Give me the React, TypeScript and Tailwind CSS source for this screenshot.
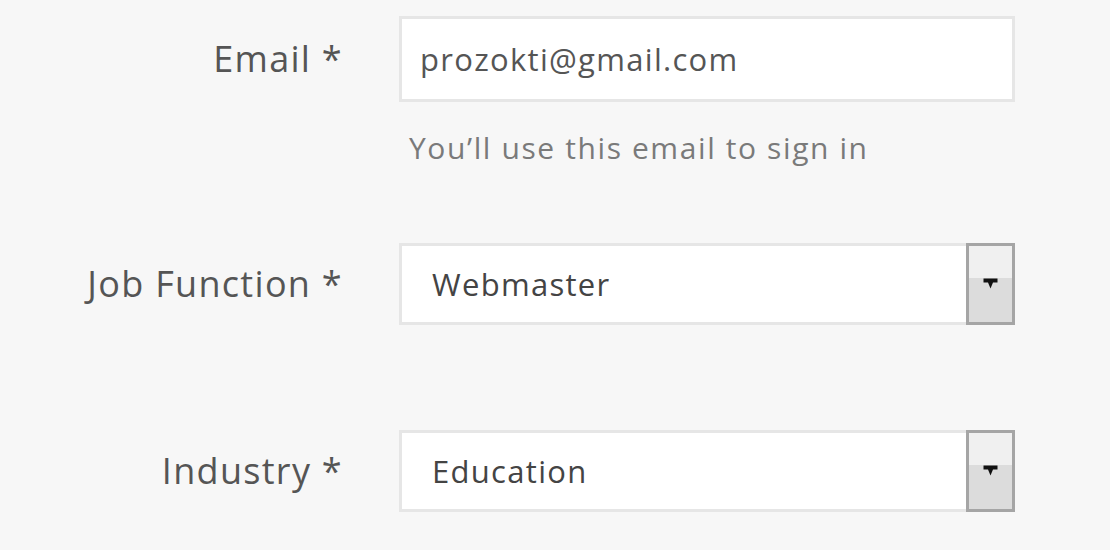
import React from "react";

function SelectBox({ value }: { value: string }) {
  return (
    <div className="flex h-[82px] w-[616px] items-stretch border-[3px] border-[#e6e6e6] bg-white">
      <div className="flex flex-1 items-center pl-[30px] text-[31px] tracking-[1.3px] text-[#444]">{value}</div>
      <div className="relative -my-[3px] -mr-[3px] flex w-[49px] flex-col border-[3px] border-[#a5a5a5]">
        <div className="h-[32px] bg-[#f0f0f0]" />
        <div className="flex-1 bg-[#dcdcdc]" />
        <svg className="absolute left-[14px] top-[32px]" width="15" height="11" viewBox="0 0 15 11">
          <path d="M0.5 0.5h14v4h-4.5l-2.5 6l-2.5-6h-4.5z" fill="#111" />
        </svg>
      </div>
    </div>
  );
}

function Label({ text }: { text: string }) {
  return (
    <div className="flex w-[343px] items-center justify-end text-[36px] tracking-[1.3px] text-[#555]">{text}</div>
  );
}

export default function App() {
  return (
    <div
      className="h-[550px] w-[1110px] overflow-hidden bg-[#f7f7f7]"
      style={{ fontFamily: '"Open Sans", "Liberation Sans", sans-serif' }}
    >
      <div className="flex flex-col pt-[16px]">
        <div className="flex h-[86px] gap-[56px]">
          <Label text="Email *" />
          <div className="flex h-[86px] w-[616px] items-center border-[3px] border-[#e6e6e6] bg-white pl-[18px] text-[31px] tracking-[1.3px] text-[#555]">
            prozokti@gmail.com
          </div>
        </div>
        <div className="flex h-[90px] items-center pl-[409px] text-[30px] tracking-[1.6px] text-[#7a7a7a]">
          You’ll use this email to sign in
        </div>

        <div className="mt-[51px] flex h-[82px] gap-[56px]">
          <Label text="Job Function *" />
          <SelectBox value="Webmaster" />
        </div>

        <div className="mt-[105px] flex h-[82px] gap-[56px]">
          <Label text="Industry *" />
          <SelectBox value="Education" />
        </div>
      </div>
    </div>
  );
}
